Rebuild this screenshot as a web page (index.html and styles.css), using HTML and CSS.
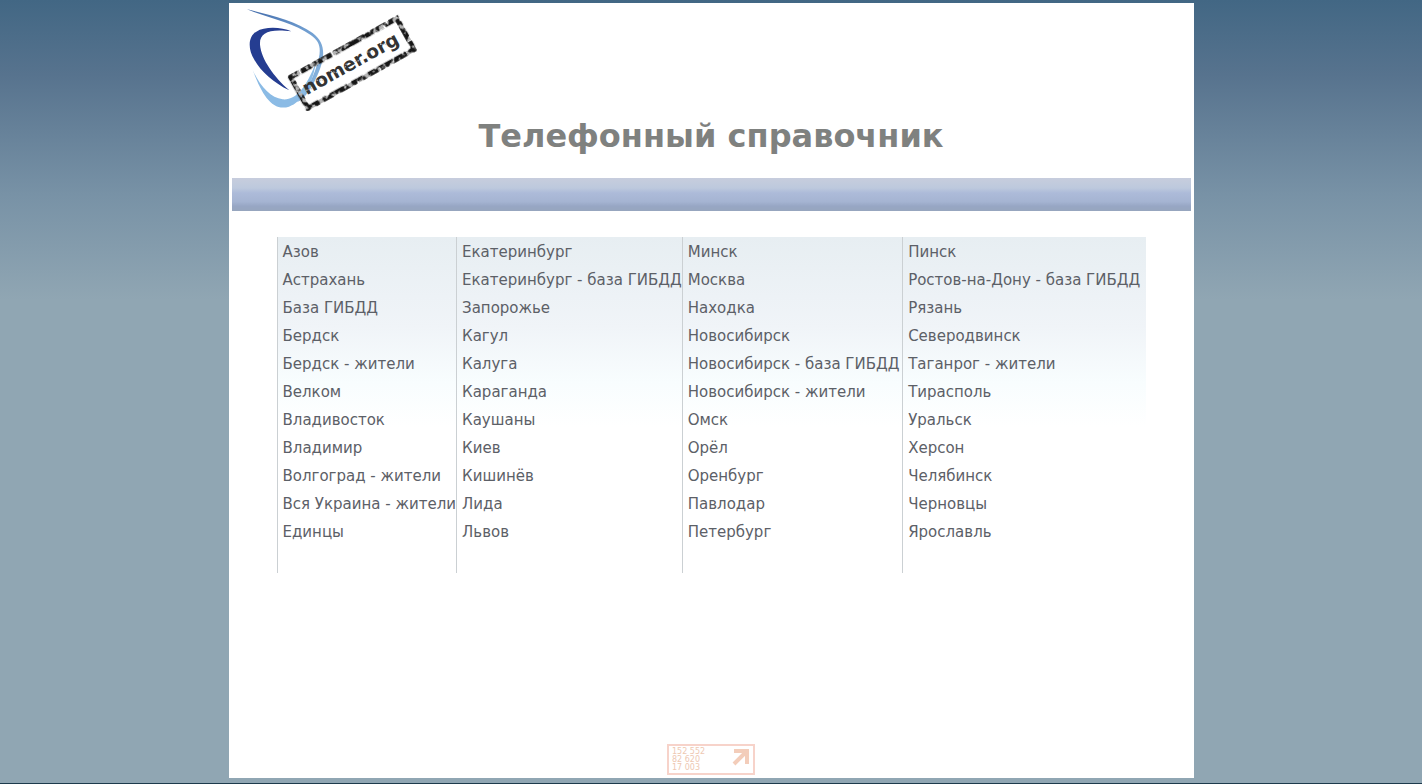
FILE: index.html
```
<!DOCTYPE html>
<html lang="ru">
<head>
    <meta charset="UTF-8">
    <meta name="viewport" content="width=device-width, initial-scale=1.0">
    <title>Телефонный справочник</title>
    <link rel="stylesheet" href="styles.css">
</head>
<body>
    <div class="page">
        <header>
            <a href="#" class="logo" aria-label="nomer.org">
                <svg viewBox="55 25 510 310">
                    <defs>
                        <linearGradient id="arc" x1="0" y1="0" x2="1" y2="1">
                            <stop offset="0" stop-color="#3f68a8"/>
                            <stop offset="0.5" stop-color="#6f9dd0"/>
                            <stop offset="1" stop-color="#8fbbe2"/>
                        </linearGradient>
                        <!-- потёртость краски -->
                        <filter id="worn" x="-5%" y="-10%" width="110%" height="120%">
                            <feTurbulence type="fractalNoise" baseFrequency="0.07" numOctaves="2" seed="4" result="noise"/>
                            <feColorMatrix in="noise" type="matrix" values="0 0 0 0 0  0 0 0 0 0  0 0 0 0 0  7 0 0 0 -2.7" result="holes"/>
                            <feComposite in="SourceGraphic" in2="holes" operator="in"/>
                        </filter>
                    </defs>
                    <!-- дуги -->
                    <path fill="url(#arc)" d="M55 29 C120 44 202 64 252 100 C292 130 290 172 268 223 C250 264 230 296 205 308 C232 274 252 238 264 199 C278 155 279 128 246 106 C196 70 116 54 55 29Z"/>
                    <path fill="#253d91" d="M188 95 C158 82 108 80 83 96 C58 111 57 148 77 180 C98 217 135 249 182 272 C136 232 98 179 94 135 C92 98 122 87 188 95Z"/>
                    <path fill="#8bbbe5" d="M72 211 C94 260 126 295 162 299 C203 302 232 265 262 188 C251 257 220 308 181 321 C131 337 99 284 72 211Z"/>
                    <!-- штамп -->
                    <g transform="translate(180 230) rotate(-29)">
                        <path class="stamp-base" d="M4 5H368V112H4Z"/>
                        <path class="stamp-ink" filter="url(#worn)" d="M4 5H368V112H4Z"/>
                        <text class="stamp-text" x="20" y="76">nomer.org</text>
                        <path class="stamp-scratch" d="M25 62l20 5m22-16l18 9m32-12l15 13m28-2l12-10m23 8l17 6m28-13l16 8m30-9l20 12"/>
                    </g>
                </svg>
            </a>
            <h1>Телефонный справочник</h1>
        </header>
        <div class="bar"></div>
        <main class="cities">
            <ul>
                <li><a href="#">Азов</a></li>
                <li><a href="#">Астрахань</a></li>
                <li><a href="#">База ГИБДД</a></li>
                <li><a href="#">Бердск</a></li>
                <li><a href="#">Бердск - жители</a></li>
                <li><a href="#">Велком</a></li>
                <li><a href="#">Владивосток</a></li>
                <li><a href="#">Владимир</a></li>
                <li><a href="#">Волгоград - жители</a></li>
                <li><a href="#">Вся Украина - жители</a></li>
                <li><a href="#">Единцы</a></li>
            </ul>
            <ul>
                <li><a href="#">Екатеринбург</a></li>
                <li><a href="#">Екатеринбург - база ГИБДД</a></li>
                <li><a href="#">Запорожье</a></li>
                <li><a href="#">Кагул</a></li>
                <li><a href="#">Калуга</a></li>
                <li><a href="#">Караганда</a></li>
                <li><a href="#">Каушаны</a></li>
                <li><a href="#">Киев</a></li>
                <li><a href="#">Кишинёв</a></li>
                <li><a href="#">Лида</a></li>
                <li><a href="#">Львов</a></li>
            </ul>
            <ul>
                <li><a href="#">Минск</a></li>
                <li><a href="#">Москва</a></li>
                <li><a href="#">Находка</a></li>
                <li><a href="#">Новосибирск</a></li>
                <li><a href="#">Новосибирск - база ГИБДД</a></li>
                <li><a href="#">Новосибирск - жители</a></li>
                <li><a href="#">Омск</a></li>
                <li><a href="#">Орёл</a></li>
                <li><a href="#">Оренбург</a></li>
                <li><a href="#">Павлодар</a></li>
                <li><a href="#">Петербург</a></li>
            </ul>
            <ul>
                <li><a href="#">Пинск</a></li>
                <li><a href="#">Ростов-на-Дону - база ГИБДД</a></li>
                <li><a href="#">Рязань</a></li>
                <li><a href="#">Северодвинск</a></li>
                <li><a href="#">Таганрог - жители</a></li>
                <li><a href="#">Тирасполь</a></li>
                <li><a href="#">Уральск</a></li>
                <li><a href="#">Херсон</a></li>
                <li><a href="#">Челябинск</a></li>
                <li><a href="#">Черновцы</a></li>
                <li><a href="#">Ярославль</a></li>
            </ul>
        </main>
        <footer>
            <!-- счётчик -->
            <a href="#" class="counter">
                <span class="numbers">
                    <span>152 552</span>
                    <span>82 620</span>
                    <span>17 003</span>
                </span>
                <svg viewBox="0 0 18 18"><path d="M2 3H15V16M15 3L2 16"/></svg>
            </a>
        </footer>
    </div>
</body>
</html>
```

FILE: styles.css
```
* {
    box-sizing: border-box;
}

body {
    font-family: Verdana, "DejaVu Sans", sans-serif;
    font-size: 15px;
    margin: 0;
    padding: 3px 0 5px;
    min-height: 100vh;
    display: flex;
    justify-content: center;
    background: #90a6b3 linear-gradient(#426784, #57738e 75px, #7892a6 195px, #90a6b3 300px) no-repeat;
    border-bottom: 1px solid #1d3a4c;
}

.page {
    width: 100%;
    max-width: 965px;
    padding: 0 3px;
    background-color: #fff;
    display: flex;
    flex-direction: column;
}

.logo {
    display: block;
    width: 170px;
    margin: 5px 0 0 15px;
}

.logo svg {
    display: block;
    width: 100%;
}

.stamp-base,
.stamp-ink,
.stamp-scratch {
    fill: none;
}

.stamp-base {
    stroke: #b5b5b5;
    stroke-width: 13;
    stroke-dasharray: 31 3 17 2 42 4 9 3;
}

.stamp-ink {
    stroke: #151515;
    stroke-width: 15;
}

.stamp-text {
    font-family: Verdana, "DejaVu Sans", sans-serif;
    font-size: 56px;
    font-weight: bold;
    fill: #333;
}

.stamp-scratch {
    stroke: #bbb;
    stroke-width: 3;
    stroke-dasharray: 5 3;
}

h1 {
    margin: 5px 0 0;
    padding-bottom: 22px;
    font-size: 32px;
    line-height: 40px;
    text-align: center;
    color: #7f817f;
}

.bar {
    height: 33px;
    background: linear-gradient(#c7cddd, #bdc9dd 30%, #adbbd9 45%, #a5b4d2 72%, #97a6c4 85%, #97a6be);
}

.cities {
    display: grid;
    grid-template-columns: 180fr 224fr 221fr 244fr;
    margin: 26px 45px 0;
    background: linear-gradient(#e7eef2, #f0f4f8 90px, #f8fdfe 145px, #fff 190px);
}

.cities ul {
    list-style: none;
    margin: 0;
    padding: 1px 0 27px 5px;
    border-left: 1px solid #cbd0d3;
}

.cities li {
    line-height: 28px;
    white-space: nowrap;
}

.cities a {
    color: #5c6067;
    text-decoration: none;
}

.cities a:hover {
    text-decoration: underline;
}

footer {
    margin-top: auto;
    padding: 20px 0 3px;
    display: flex;
    justify-content: center;
}

.counter {
    width: 88px;
    height: 31px;
    padding: 2px 3px;
    display: flex;
    justify-content: space-between;
    border: 2px solid #f7d3ca;
    color: #eec8b2;
    text-decoration: none;
}

.numbers {
    display: flex;
    flex-direction: column;
    font-family: Verdana, "DejaVu Sans", sans-serif;
    font-size: 8px;
    line-height: 8px;
}

.counter svg {
    width: 18px;
    height: 18px;
    fill: none;
    stroke: #f3cdba;
    stroke-width: 4;
}
```
